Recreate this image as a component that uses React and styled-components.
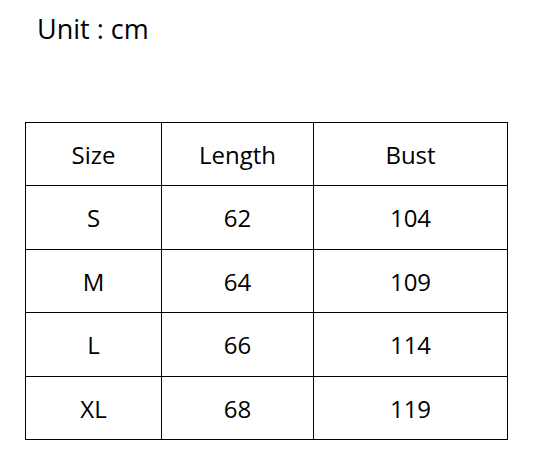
import styled, { createGlobalStyle } from "styled-components";

const GlobalStyle = createGlobalStyle`
  body {
    margin: 0;
    background: #fff;
    font-family: "Open Sans", "Noto Sans", sans-serif;
    color: #000;
  }
`;

const Page = styled.div`
  width: 537px;
  height: 471px;
  padding: 11px 0 0 37px;
  box-sizing: border-box;
`;

const Unit = styled.div`
  font-size: 27px;
  line-height: 36px;
`;

const Table = styled.table`
  margin: 75px 0 0 -12px;
  border-collapse: collapse;
  table-layout: fixed;
`;

const Cell = styled.td`
  border: 1px solid #000;
  height: ${(p) => p.h}px;
  padding: 0;
  text-align: center;
  vertical-align: middle;
  font-size: 24px;
  width: ${(p) => p.w}px;
`;

const rows = [
  ["Size", "Length", "Bust"],
  ["S", "62", "104"],
  ["M", "64", "109"],
  ["L", "66", "114"],
  ["XL", "68", "119"],
];

const widths = [135, 151, 193];
const heights = [62, 63, 62, 63, 62];

export default function App() {
  return (
    <>
      <GlobalStyle />
      <Page>
        <Unit>Unit : cm</Unit>
        <Table>
          <tbody>
            {rows.map((r, i) => (
              <tr key={i}>
                {r.map((c, j) => (
                  <Cell key={j} w={widths[j]} h={heights[i]}>
                    {c}
                  </Cell>
                ))}
              </tr>
            ))}
          </tbody>
        </Table>
      </Page>
    </>
  );
}
